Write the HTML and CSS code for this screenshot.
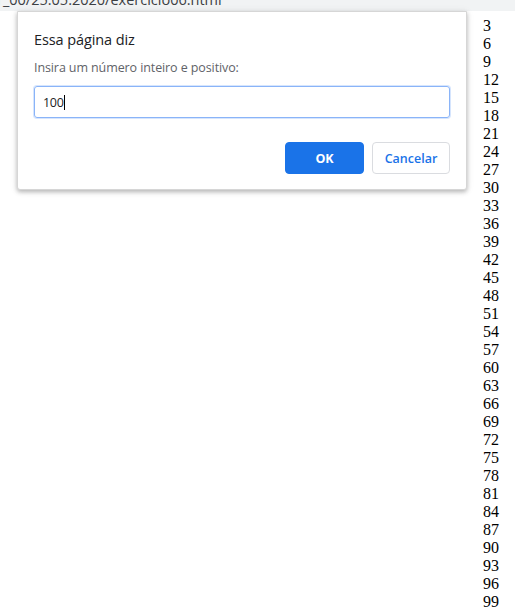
FILE: index.html
```html
<!DOCTYPE html>
<html lang="pt-BR">
<head>
<meta charset="utf-8">
<title>exercicio06</title>
<link rel="stylesheet" href="styles.css">
</head>
<body>
<div class="urlbar"><span class="url">r_00/25.05.2020/exercicio06.html</span></div>
<main class="page">
<div class="nums">
<div>3</div><div>6</div><div>9</div><div>12</div><div>15</div><div>18</div><div>21</div><div>24</div><div>27</div><div>30</div><div>33</div><div>36</div><div>39</div><div>42</div><div>45</div><div>48</div><div>51</div><div>54</div><div>57</div><div>60</div><div>63</div><div>66</div><div>69</div><div>72</div><div>75</div><div>78</div><div>81</div><div>84</div><div>87</div><div>90</div><div>93</div><div>96</div><div>99</div>
</div>
</main>
<div class="dialog">
<div class="title">Essa página diz</div>
<div class="msg">Insira um número inteiro e positivo:</div>
<div class="field"><span class="val">100</span><span class="caret"></span></div>
<div class="actions">
<button class="btn ok">OK</button>
<button class="btn cancel">Cancelar</button>
</div>
</div>
</body>
</html>
```
FILE: styles.css
```css
html, body {
  margin: 0;
  padding: 0;
  background: #ffffff;
}
body {
  width: 515px;
  height: 615px;
  overflow: hidden;
  position: relative;
}
.urlbar {
  height: 11px;
  background: #f1f3f4;
  overflow: hidden;
}
.url {
  display: block;
  margin-top: -10px;
  font-family: "Open Sans", sans-serif;
  font-size: 14.5px;
  line-height: 19px;
  color: #3c4043;
  margin-left: -3px;
  white-space: nowrap;
}
.page {
  padding: 6px 0 0 483px;
}
.nums {
  font-family: "Liberation Serif", serif;
  font-size: 16px;
  line-height: 18px;
  color: #000;
}
.dialog {
  position: absolute;
  left: 17px;
  top: 11px;
  width: 416px;
  padding: 18px 16px 15px 16px;
  background: #fff;
  border: 1px solid #d6d6d6;
  border-radius: 0 0 3px 3px;
  box-shadow: 0 2px 4px rgba(0,0,0,0.25), 0 1px 8px rgba(0,0,0,0.08);
  font-family: "Open Sans", sans-serif;
}
.title {
  font-size: 14.5px;
  line-height: 20px;
  color: #202124;
  letter-spacing: -0.1px;
}
.msg {
  margin-top: 9px;
  font-size: 12.5px;
  line-height: 18px;
  color: #5f6368;
  letter-spacing: -0.1px;
}
.field {
  margin-top: 9px;
  height: 32px;
  box-sizing: border-box;
  border: 1px solid #8ab4f8;
  border-radius: 3px;
  box-shadow: 0 0 0 1px rgba(138,180,248,0.35);
  display: flex;
  align-items: center;
  padding-left: 8px;
  font-size: 12.5px;
  color: #202124;
}
.val {
  letter-spacing: -0.3px;
}
.caret {
  display: inline-block;
  width: 1px;
  height: 15px;
  background: #000;
}
.actions {
  margin-top: 24px;
  display: flex;
  justify-content: flex-end;
  gap: 8px;
}
.btn {
  height: 32px;
  border-radius: 4px;
  font-family: "Open Sans", sans-serif;
  font-size: 12.5px;
  padding: 0;
  cursor: pointer;
}
.ok {
  width: 79px;
  background: #1a73e8;
  border: 1px solid #1a73e8;
  color: #fff;
  font-weight: 700;
}
.cancel {
  width: 78px;
  background: #fff;
  border: 1px solid #dadce0;
  color: #1a73e8;
  font-weight: 600;
}
```
